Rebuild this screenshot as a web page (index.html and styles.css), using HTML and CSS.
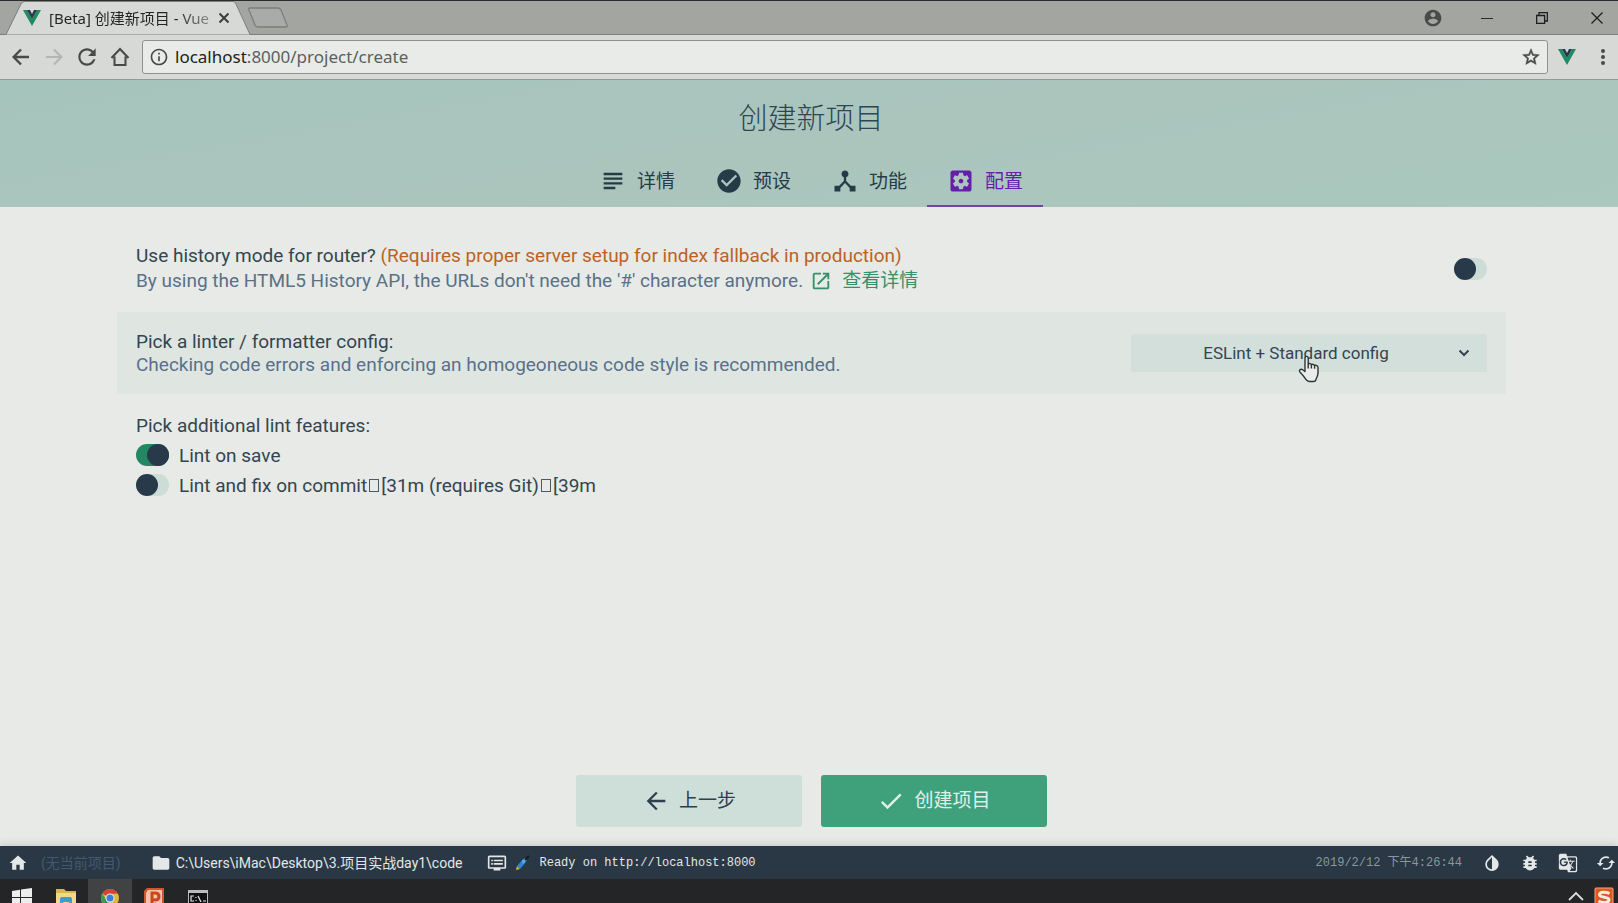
FILE: index.html
```html
<!DOCTYPE html>
<html lang="zh-CN">
<head>
<meta charset="utf-8">
<title>[Beta] 创建新项目 - Vue CLI</title>
<link rel="stylesheet" href="styles.css">
</head>
<body>
<header class="browser">
  <div class="tabstrip">
    <div class="tab">
      <svg class="tab-shape" viewBox="0 0 246 33" preserveAspectRatio="none"><path d="M0 33.5H1L16 3Q17 .5 20 .5H228Q230 .5 231 3L245 33.5H246" fill="#d7d9d6" stroke="#7c7e7b"/></svg>
      <svg class="vue" viewBox="0 0 18 16"><path d="M0 0h4l5 9 5-9h4L9 16z" fill="#1f8a63"/><path d="M4 0h3l2 4 2-4h3L9 9z" fill="#26384a"/></svg>
      <span class="tab-title">[Beta] 创建新项目 - Vue</span>
      <button class="icon-btn" aria-label="关闭标签页"><svg class="i12" viewBox="0 0 12 12"><path d="M1.5 1.5l9 9m0-9l-9 9" stroke="#3c3e3d" stroke-width="2"/></svg></button>
    </div>
    <button class="icon-btn new-tab" aria-label="新标签页"><svg viewBox="0 0 42 22"><path d="M3 1h28q2 0 3 2l6 15q1 2-2 2H11q-2 0-3-2L2 3Q1 1 3 1z" fill="#a9aba8" stroke="#7c7e7b" stroke-width="1.3"/></svg></button>
    <div class="window-controls">
      <button class="icon-btn user" aria-label="用户"><svg class="i20" viewBox="0 0 24 24"><path fill="#484b49" d="M12 2C6.480 2 2 6.480 2 12s4.480 10 10 10 10-4.480 10-10S17.520 2 12 2zm0 3c1.660 0 3 1.340 3 3s-1.340 3-3 3-3-1.340-3-3 1.340-3 3-3zm0 14.200c-2.500 0-4.710-1.280-6-3.220.03-1.990 4-3.080 6-3.080 1.990 0 5.970 1.090 6 3.080-1.290 1.940-3.500 3.220-6 3.220z"/></svg></button>
      <button class="icon-btn" aria-label="最小化"><svg class="i12" viewBox="0 0 12 12"><path d="M0 6.5h12" stroke="#2b2d2c"/></svg></button>
      <button class="icon-btn" aria-label="还原"><svg class="i12" viewBox="0 0 12 12"><path d="M.6 3.500h8v8h-8zM3 3.500V.6h8.400V9H8.600" fill="none" stroke="#1d1f1e" stroke-width="1.3"/></svg></button>
      <button class="icon-btn" aria-label="关闭"><svg class="i12" viewBox="0 0 12 12"><path d="M.5.5l11 11m0-11l-11 11" stroke="#1d1f1e" stroke-width="1.3"/></svg></button>
    </div>
  </div>
  <div class="toolbar">
    <button class="icon-btn nav" aria-label="后退"><svg class="i18" viewBox="0 0 18 18"><path d="M17 9H2M9 1.500L1.600 9 9 16.500" fill="none" stroke="#484a49" stroke-width="2.4"/></svg></button>
    <button class="icon-btn nav" aria-label="前进" disabled><svg class="i18" viewBox="0 0 18 18"><path d="M1 9h15M9 1.500L16.400 9 9 16.500" fill="none" stroke="#b4b6b3" stroke-width="2.2"/></svg></button>
    <button class="icon-btn nav" aria-label="重新加载"><svg class="i26" viewBox="0 0 24 24"><path fill="#484a49" d="M17.650 6.350C16.200 4.900 14.210 4 12 4c-4.420 0-7.990 3.580-7.990 8s3.570 8 7.990 8c3.730 0 6.840-2.550 7.730-6h-2.080c-.82 2.330-3.040 4-5.650 4-3.310 0-6-2.690-6-6s2.690-6 6-6c1.660 0 3.140.69 4.220 1.780L13 11h7V4l-2.350 2.350z"/></svg></button>
    <button class="icon-btn nav" aria-label="主页"><svg class="i20" viewBox="0 0 20 20"><path d="M1.500 11L10 2l8.500 9M4.500 9.500V18h11V9.500" fill="none" stroke="#484a49" stroke-width="2.1"/></svg></button>
    <label class="omnibox">
      <svg class="i20" viewBox="0 0 24 24"><path fill="#484a49" d="M11 17h2v-6h-2v6zm1-15C6.480 2 2 6.480 2 12s4.480 10 10 10 10-4.480 10-10S17.520 2 12 2zm0 18c-4.410 0-8-3.590-8-8s3.590-8 8-8 8 3.590 8 8-3.590 8-8 8zM11 9h2V7h-2v2z"/></svg>
      <span class="url" role="textbox" aria-label="地址"><b>localhost</b>:8000/project/create</span>
      <svg class="i20" viewBox="0 0 24 24"><path fill="#484a49" stroke="#484a49" stroke-width=".6" d="M22 9.240l-7.190-.62L12 2 9.190 8.630 2 9.240l5.460 4.730L5.820 21 12 17.270 18.180 21l-1.630-7.030L22 9.240zM12 15.400l-3.760 2.270 1-4.280-3.320-2.880 4.380-.38L12 6.100l1.710 4.040 4.380.38-3.320 2.880 1 4.280L12 15.400z"/></svg>
    </label>
    <button class="icon-btn ext" aria-label="Vue devtools"><svg class="vue" viewBox="0 0 18 16"><path d="M0 0h4l5 9 5-9h4L9 16z" fill="#1f8a63"/><path d="M4 0h3l2 4 2-4h3L9 9z" fill="#26384a"/></svg></button>
    <button class="icon-btn more" aria-label="菜单"><svg class="i18" viewBox="0 0 18 18"><g fill="#484a49"><circle cx="9" cy="3" r="2"/><circle cx="9" cy="9" r="2"/><circle cx="9" cy="15" r="2"/></g></svg></button>
  </div>
</header>

<div class="page-head">
  <h1>创建新项目</h1>
  <nav class="steps">
    <a href="#details"><svg viewBox="0 0 24 24"><path d="M14 17H4v2h10v-2zm6-8H4v2h16V9zM4 15h16v-2H4v2zM4 5v2h16V5H4z"/></svg>详情</a>
    <a href="#presets"><svg viewBox="0 0 24 24"><path d="M12 2C6.480 2 2 6.480 2 12s4.480 10 10 10 10-4.480 10-10S17.520 2 12 2zm-2 15l-5-5 1.410-1.410L10 14.170l7.590-7.590L19 8l-9 9z"/></svg>预设</a>
    <a href="#features"><svg viewBox="0 0 24 24"><path d="M17 16l-4-4V8.820C14.160 8.400 15 7.300 15 6c0-1.660-1.340-3-3-3S9 4.340 9 6c0 1.300.84 2.400 2 2.820V12l-4 4H3v5h5v-3.050l4-4.200 4 4.200V21h5v-5h-4z"/></svg>功能</a>
    <a href="#config" class="active" aria-current="page"><svg viewBox="0 0 24 24"><path d="M12 10c-1.100 0-2 .9-2 2s.9 2 2 2 2-.9 2-2-.9-2-2-2zm7-7H5c-1.110 0-2 .9-2 2v14c0 1.100.89 2 2 2h14c1.110 0 2-.9 2-2V5c0-1.100-.89-2-2-2zm-1.750 9c0 .23-.02.46-.05.68l1.480 1.160c.13.11.17.3.08.45l-1.400 2.420c-.09.15-.27.21-.43.15l-1.740-.7c-.36.28-.76.51-1.180.69l-.26 1.850c-.03.17-.18.3-.35.3h-2.800c-.17 0-.32-.13-.35-.29l-.26-1.850c-.43-.18-.82-.41-1.180-.69l-1.740.7c-.16.06-.34 0-.43-.15l-1.400-2.420c-.09-.15-.05-.34.08-.45l1.480-1.160c-.03-.23-.05-.46-.05-.69 0-.23.02-.46.05-.68l-1.480-1.160c-.13-.11-.17-.3-.08-.45l1.400-2.420c.09-.15.27-.21.43-.15l1.740.7c.36-.28.76-.51 1.180-.69l.26-1.850c.03-.17.18-.3.35-.3h2.800c.17 0 .32.13.35.29l.26 1.850c.43.18.82.41 1.180.69l1.740-.7c.16-.06.34 0 .43.15l1.400 2.420c.09.15.05.34-.08.45l-1.480 1.160c.03.23.05.46.05.69z"/></svg>配置</a>
  </nav>
</div>

<main class="content">
  <section class="prompt">
    <div class="info">
      <label class="name" for="history">Use history mode for router? <span class="warn">(Requires proper server setup for index fallback in production)</span></label>
      <p class="desc with-link">By using the HTML5 History API, the URLs don't need the '#' character anymore.
        <a href="#more"><svg viewBox="0 0 24 24"><path d="M19 19H5V5h7V3H5c-1.110 0-2 .9-2 2v14c0 1.100.89 2 2 2h14c1.100 0 2-.9 2-2v-7h-2v7zM14 3v2h3.590l-9.830 9.830 1.410 1.410L19 6.410V10h2V3h-7z"/></svg>查看详情</a></p>
    </div>
    <input class="switch" type="checkbox" id="history">
  </section>
  <section class="prompt hover">
    <div class="info">
      <label class="name" for="linter">Pick a linter / formatter config:</label>
      <p class="desc">Checking code errors and enforcing an homogeoneous code style is recommended.</p>
    </div>
    <div class="select">
      <select id="linter"><option>ESLint + Standard config</option></select>
      <svg class="chevron" viewBox="0 0 12 8"><path d="M1.500 1.500L6 6l4.500-4.500" fill="none" stroke="#34454f" stroke-width="2"/></svg>
      <svg class="pointer" viewBox="0 0 22 28"><path d="M7 14V3.500C7 .6 10.200.6 10.200 3.500V9c1-.9 2.800-.5 3.100.7 1.100-.8 2.700-.4 3.100.8 1.600-.7 3.600 0 3.600 2.200V18c0 3-1.500 4.500-2.200 7-.3 1-1.300 1.500-2.400 1.500h-4c-1.500 0-2.500-.6-3.300-1.800-1.600-2.500-3.500-4.900-6-7.400-1.600-2 .5-3.800 2.500-2.600L7 16.500V14M10.200 8v5.500M13.400 10v3.500M16.600 10.800v3" fill="#e9ecea" stroke="#2d3435" stroke-width="1.4" stroke-linejoin="round"/></svg>
    </div>
  </section>
  <section class="prompt">
    <fieldset class="info">
      <legend class="name">Pick additional lint features:</legend>
      <div class="choices">
        <label class="choice"><input class="switch" type="checkbox" checked>Lint on save</label>
        <label class="choice"><input class="switch" type="checkbox"><span>Lint and fix on commit<i class="tofu"></i>[31m (requires Git)<i class="tofu"></i>[39m</span></label>
      </div>
    </fieldset>
  </section>
</main>

<div class="actions">
  <button class="btn"><svg viewBox="0 0 24 24"><path d="M20 11H7.830l5.590-5.590L12 4l-8 8 8 8 1.410-1.410L7.830 13H20v-2z"/></svg>上一步</button>
  <button class="btn primary"><svg viewBox="0 0 24 24"><path d="M9 16.170L4.830 12l-1.420 1.410L9 19 21 7l-1.410-1.410z"/></svg>创建项目</button>
</div>

<footer class="status">
  <a href="#home" class="home" aria-label="主页"><svg viewBox="0 0 24 24"><path d="M10 20v-6h4v6h5v-8h3L12 3 2 12h3v8z"/></svg></a>
  <span class="project">(无当前项目)</span>
  <a href="#folder" class="path"><svg viewBox="0 0 24 24"><path d="M10 4H4c-1.100 0-1.990.9-1.990 2L2 18c0 1.100.9 2 2 2h16c1.100 0 2-.9 2-2V8c0-1.100-.9-2-2-2h-8l-2-2z"/></svg>C:\Users\iMac\Desktop\3.项目实战day1\code</a>
  <div class="log">
    <svg viewBox="0 0 24 24"><path d="M21 3H3c-1.100 0-2 .9-2 2v12c0 1.100.9 2 2 2h5v2h8v-2h5c1.100 0 1.990-.9 1.990-2L23 5c0-1.100-.9-2-2-2zm0 14H3V5h18v12zm-2-9H8v2h11V8zm0 4H8v2h11v-2zM7 8H5v2h2V8zm0 4H5v2h2v-2z"/></svg>
    <svg class="brush" viewBox="0 0 16 16"><path d="M1 15l1-4 3 3z" fill="#e6b52c"/><path d="M2 11l6-7 3 3-6 7z" fill="#2b86d6"/><path d="M7 6l3-3 2 2-4 4z" fill="#59aef0"/><path d="M10 5l4-4" stroke="#0f1c26" stroke-width="2"/></svg>
    <span>Ready on http://localhost:8000</span>
  </div>
  <time>2019/2/12 下午4:26:44</time>
  <div class="tools">
    <button class="icon-btn" aria-label="切换主题"><svg viewBox="0 0 24 24"><path d="M17.660 7.930L12 2.270 6.340 7.930c-3.120 3.120-3.120 8.190 0 11.310C7.900 20.800 9.950 21.580 12 21.580c2.050 0 4.100-.78 5.660-2.340 3.120-3.120 3.120-8.190 0-11.310zM12 19.590c-1.600 0-3.110-.62-4.240-1.760C6.620 16.690 6 15.190 6 13.590s.62-3.110 1.760-4.240L12 5.100v14.490z"/></svg></button>
    <button class="icon-btn" aria-label="报告问题"><svg viewBox="0 0 24 24"><path d="M20 8h-2.810c-.45-.78-1.070-1.450-1.820-1.960L17 4.410 15.590 3l-2.170 2.170C12.960 5.060 12.490 5 12 5c-.49 0-.96.06-1.410.17L8.410 3 7 4.410l1.620 1.630C7.880 6.550 7.260 7.220 6.810 8H4v2h2.090c-.05.33-.09.66-.09 1v1H4v2h2v1c0 .34.04.67.09 1H4v2h2.810c1.040 1.790 2.970 3 5.190 3s4.150-1.210 5.190-3H20v-2h-2.090c.05-.33.09-.66.09-1v-1h2v-2h-2v-1c0-.34-.04-.67-.09-1H20V8zm-6 8h-4v-2h4v2zm0-4h-4v-2h4v2z"/></svg></button>
    <button class="icon-btn" aria-label="翻译"><svg viewBox="0 0 24 24"><path d="M21 4H11l-1-3H3c-1.100 0-2 .9-2 2v15c0 1.100.9 2 2 2h8l1 3h9c1.100 0 2-.9 2-2V6c0-1.100-.9-2-2-2zM7 16c-2.760 0-5-2.240-5-5s2.240-5 5-5c1.350 0 2.480.5 3.350 1.300L9.030 8.570c-.38-.36-1.040-.78-2.030-.78-1.740 0-3.150 1.440-3.150 3.210S5.260 14.210 7 14.210c2.010 0 2.840-1.440 2.920-2.410H7v-1.710h4.680c.07.31.12.61.12 1.020C11.800 13.970 9.890 16 7 16zm6.170-5.420h3.700c-.43 1.250-1.110 2.430-2.050 3.470-.31-.35-.6-.72-.86-1.100l-.79-2.370zm8.330 9.920c0 .55-.45 1-1 1H14l2-2.500-1.040-3.100 3.100 3.100.92-.92-3.300-3.250.02-.02c1.130-1.250 1.930-2.690 2.400-4.220H20v-1.300h-4.530V8h-1.290v1.290h-1.440L11.460 5.500h9.040c.55 0 1 .45 1 1v14z"/></svg></button>
    <button class="icon-btn" aria-label="刷新"><svg viewBox="0 0 24 24"><path d="M19 8l-4 4h3c0 3.310-2.690 6-6 6-1.010 0-1.970-.25-2.800-.7l-1.460 1.460C8.970 19.540 10.430 20 12 20c4.420 0 8-3.580 8-8h3l-4-4zM6 12c0-3.310 2.690-6 6-6 1.010 0 1.970.25 2.800.7l1.460-1.460C15.030 4.460 13.570 4 12 4c-4.420 0-8 3.580-8 8H1l4 4 4-4H6z"/></svg></button>
  </div>
</footer>

<div class="taskbar">
  <button class="task" aria-label="开始"><svg viewBox="0 0 20 20"><path fill="#eceeee" d="M0 3l8-1.200V9H0zM9 1.600L20 0v9H9zM0 10h8v7.300L0 16zM9 10h11v9.500L9 18z"/></svg></button>
  <button class="task" aria-label="文件资源管理器"><svg viewBox="0 0 20 20"><path fill="#d9b64c" d="M0 1h8l2 2h10v17H0z"/><path fill="#f0d98b" d="M0 5h20v15H0z"/><path fill="#3d9bd0" d="M4 20v-9q0-2 2-2h8q2 0 2 2v9h-3v-6H7v6z"/></svg></button>
  <button class="task current" aria-label="Chrome"><svg viewBox="0 0 20 20"><circle cx="10" cy="10" r="9" fill="#e0b93a"/><path fill="#cf4638" d="M10 10L2.200 5.500A9 9 0 0 1 17.800 5.500L10 6z"/><path fill="#3c9a56" d="M2.200 5.500L6.500 12l4 7A9 9 0 0 1 2.200 5.500z"/><circle cx="10" cy="10" r="4.5" fill="#e9ecea"/><circle cx="10" cy="10" r="3.5" fill="#3f7fdb"/></svg></button>
  <button class="task" aria-label="PowerPoint"><svg viewBox="0 0 20 20"><path fill="#d2562b" d="M3 0h17v20H0V3z"/><path fill="#f0c3ae" d="M4 2h14v18H2V5z"/><path fill="none" stroke="#c9481f" stroke-width="3" d="M8 17V5h3q4 0 4 3.500T11 12H8"/></svg></button>
  <button class="task" aria-label="命令提示符"><svg viewBox="0 0 20 20"><path fill="#101112" stroke="#b9bcbb" d="M.5 2.500h19v17H.5z"/><path fill="#b9bcbb" d="M0 2h20v3H0z"/><path fill="none" stroke="#e6e8e7" stroke-width="1.2" d="M6 8H3v5h3M8 9v1m0 2v1M10 8l3 6M15 13h3"/></svg></button>
  <div class="tray">
    <svg viewBox="0 0 20 20"><path d="M3 13l7-7 7 7" fill="none" stroke="#d9dcdb" stroke-width="1.8"/></svg>
    <svg viewBox="0 0 20 20"><rect x="1" y="1" width="18" height="19" rx="1" fill="#e2571d" stroke="#eda98a"/><path d="M15.500 6.500C12 4.800 5.500 4.500 5.500 7.800S15 9.500 15 12.800 8 16 4.500 14" fill="none" stroke="#f3ebe6" stroke-width="3"/></svg>
  </div>
</div>
</body>
</html>
```
FILE: styles.css
```css
* { box-sizing: border-box; }

body {
  margin: 0;
  min-height: 100vh;
  display: flex;
  flex-direction: column;
  background: #e7eae6;
  color: #34454f;
  font-family: Roboto, "Noto Sans CJK SC", sans-serif;
  font-size: 19px;
  line-height: 23px;
}

svg { display: block; flex: none; }
a { color: inherit; text-decoration: none; }
p, h1, fieldset, legend { margin: 0; padding: 0; border: 0; }

.icon-btn {
  display: flex;
  align-items: center;
  justify-content: center;
  padding: 0;
  border: 0;
  background: none;
}
.i12 { width: 12px; height: 12px; }
.i18 { width: 18px; height: 18px; }
.i20 { width: 20px; height: 20px; }
.i26 { width: 26px; height: 26px; }
.vue { width: 18px; height: 16px; }

/* Browser chrome */
.browser {
  background: #d7d9d6;
  border-bottom: 1px solid #969a96;
}
.tabstrip {
  display: flex;
  align-items: center;
  height: 35px;
  padding-left: 5px;
  background: #a3a5a1;
  border-top: 1px solid #2c2a2c;
  border-bottom: 1px solid #7c7e7b;
}
.tab {
  position: relative;
  display: flex;
  align-items: center;
  width: 246px;
  height: 33px;
  padding: 0 21px 0 18px;
}
.tab > * { position: relative; }
.tab .tab-shape {
  position: absolute;
  inset: 0;
  width: 100%;
  height: 100%;
  overflow: visible;
}
.tab-title {
  flex: 1;
  margin-left: 8px;
  font: 15px/20px "Noto Sans", "Noto Sans CJK SC", sans-serif;
  white-space: nowrap;
  background: linear-gradient(90deg, #222423 75%, #a0a2a0 99%);
  -webkit-background-clip: text;
  background-clip: text;
  -webkit-text-fill-color: transparent;
}
.new-tab svg { width: 42px; height: 22px; }
.new-tab { margin-left: -4px; }
.window-controls {
  display: flex;
  gap: 43px;
  margin-left: auto;
  padding-right: 15px;
}
.user { margin-right: -5px; }
.toolbar {
  display: flex;
  align-items: center;
  height: 44px;
  padding: 0 2px 0 4px;
}
.nav { width: 33px; height: 32px; }
.omnibox {
  flex: 1;
  display: flex;
  align-items: center;
  gap: 6px;
  height: 34px;
  margin-left: 6px;
  padding: 0 6px;
  background: #e8ebe7;
  border: 1px solid #8f918e;
  border-radius: 3px;
}
.url {
  flex: 1;
  color: #5c5f5d;
  font: 17px/24px "Noto Sans", sans-serif;
}
.url b { color: #202221; font-weight: 400; }
.ext { width: 38px; }
.more { width: 26px; margin-left: 4px; }

/* Wizard header */
.page-head {
  display: flex;
  flex-direction: column;
  align-items: center;
  padding: 21px 0 0 4px;
  background: linear-gradient(170deg, #a5c4bc, #abc5bd 50%, #aac8be);
}
h1 {
  color: #2d4652;
  font-size: 29px;
  font-weight: 300;
  line-height: 36px;
}
.steps { display: flex; margin-top: 20px; }
.steps a {
  display: flex;
  align-items: center;
  gap: 10px;
  height: 50px;
  padding: 0 20px;
  border-bottom: 2px solid transparent;
  color: #253c48;
}
.steps svg { width: 28px; height: 28px; fill: currentColor; }
.steps .active { color: #6420ac; border-color: #70469f; }

/* Prompts */
.content {
  flex: 1;
  padding: 19px 112px 0 117px;
}
.prompt {
  display: flex;
  align-items: center;
  justify-content: space-between;
  padding: 18px 19px;
}
.hover { background: #dfe6e2; }
.hover + .prompt { padding-top: 20px; }
.name { display: block; }
.warn { color: #bd6224; }
.desc { color: #597189; }
.with-link, .with-link a { display: flex; align-items: center; }
.with-link { min-height: 27px; }
.with-link a { margin-left: 7px; gap: 10px; color: #35906c; }
.with-link svg { width: 22px; height: 22px; fill: currentColor; }

.switch {
  appearance: none;
  flex: none;
  width: 33px;
  height: 22px;
  margin: 0;
  border-radius: 11px;
  background: #ccdcd7;
}
.switch::before {
  content: "";
  display: block;
  width: 22px;
  height: 22px;
  border-radius: 50%;
  background: #283a49;
}
.switch:checked { background: #248763; }
.switch:checked::before { margin-left: auto; }
.choices { padding-top: 3px; }
.choice {
  display: flex;
  align-items: center;
  gap: 10px;
  height: 30px;
}
.tofu {
  display: inline-block;
  width: 10px;
  height: 13px;
  margin: 0 2px;
  border: 1px solid #4c5b63;
}

.select { position: relative; width: 356px; }
.select select {
  appearance: none;
  display: block;
  width: 100%;
  height: 38px;
  padding: 0 26px 1px 0;
  border: 0;
  border-radius: 2px;
  background: #d2dfdb;
  color: #34454f;
  font: 17px/22px Roboto, sans-serif;
  text-align: center;
  text-align-last: center;
}
.chevron {
  position: absolute;
  right: 17px;
  top: 15px;
  width: 12px;
  height: 8px;
  pointer-events: none;
}
.pointer {
  position: absolute;
  left: 167px;
  top: 21px;
  width: 22px;
  height: 28px;
  pointer-events: none;
}

.actions {
  display: flex;
  justify-content: center;
  gap: 19px;
  padding: 0 0 19px 5px;
}
.btn {
  display: flex;
  align-items: center;
  justify-content: center;
  gap: 9px;
  width: 226px;
  height: 52px;
  padding: 0;
  border: 0;
  border-radius: 3px;
  background: #cedfd9;
  color: #2d4050;
  font: 19px/24px Roboto, "Noto Sans CJK SC", sans-serif;
}
.btn svg { width: 28px; height: 28px; fill: currentColor; }
.primary { background: #3fa17c; color: #e2efe8; }

/* Status bar */
.status {
  display: flex;
  align-items: center;
  height: 33px;
  padding: 0 2px 0 8px;
  background: #2a3744;
  box-shadow: 0 -2px 8px rgba(0, 0, 0, .14);
  color: #e3e7e8;
  font-size: 14px;
  line-height: 20px;
}
.status svg { width: 20px; height: 20px; fill: #e3e7e8; }
.project { margin-left: 13px; color: #415973; }
.path {
  display: flex;
  align-items: center;
  gap: 5px;
  margin-left: 30px;
}
.log, time { font: 12px/18px "Liberation Mono", "Noto Sans CJK SC", monospace; }
.log {
  display: flex;
  align-items: center;
  margin-left: 24px;
}
.log .brush { width: 16px; height: 16px; margin: 0 9px 0 8px; }
time { margin-left: auto; color: #8b969d; }
.tools { display: flex; gap: 18px; margin-left: 20px; }

/* Desktop taskbar */
.taskbar {
  display: flex;
  height: 24px;
  overflow: hidden;
  background: #242527;
}
.task {
  display: flex;
  justify-content: center;
  width: 44px;
  height: 40px;
  padding: 9px 0 0;
  border: 0;
  background: none;
}
.task.current { background: #414244; }
.task svg, .tray svg { width: 20px; height: 20px; }
.tray {
  display: flex;
  gap: 8px;
  margin-left: auto;
  padding: 8px 4px 0 0;
}
```
